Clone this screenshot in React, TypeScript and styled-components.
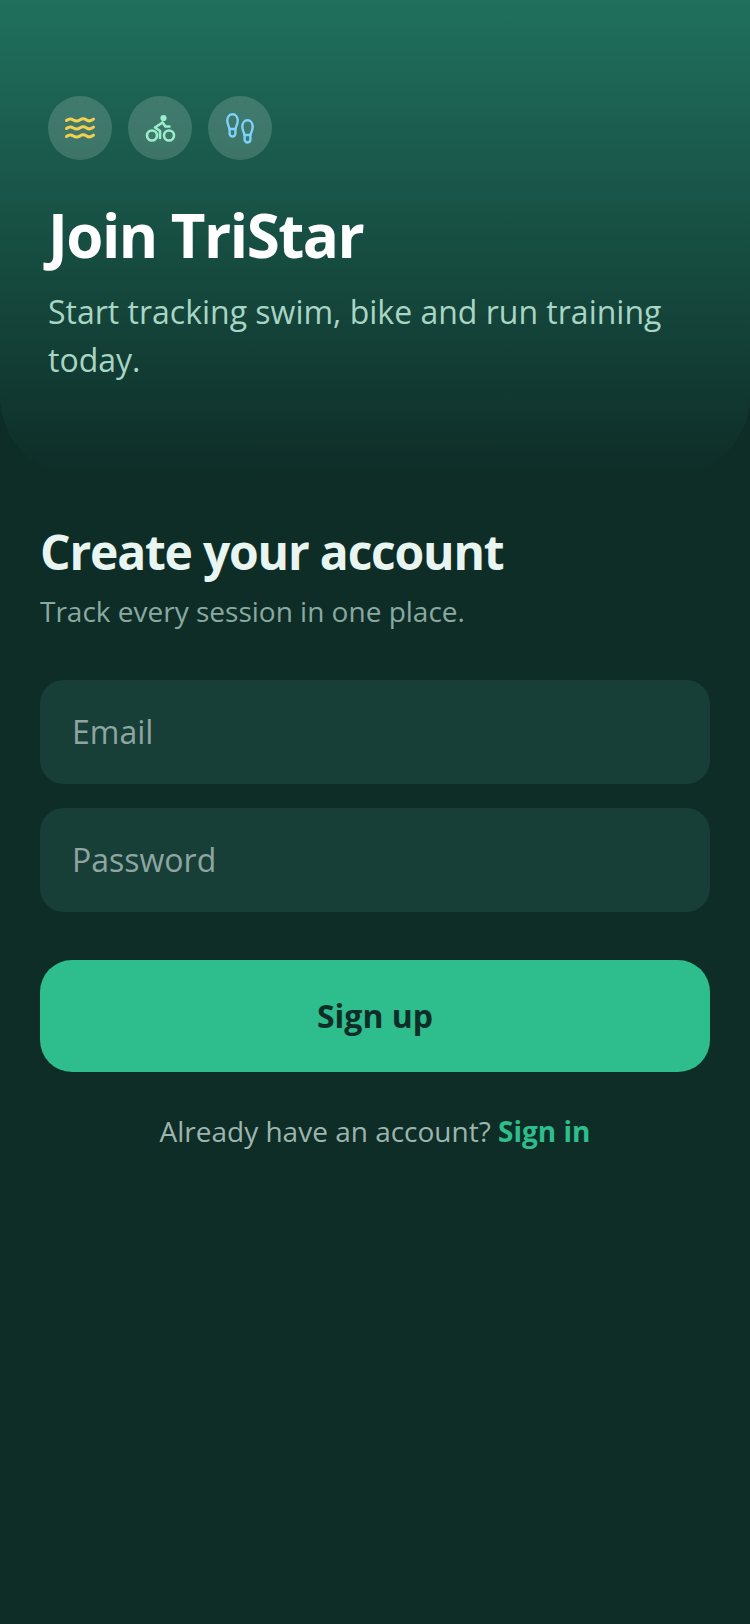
import React from "react";
import styled, { createGlobalStyle } from "styled-components";

const Global = createGlobalStyle`
  html, body { margin: 0; padding: 0; background: #0e2d27; }
  body { font-family: "Open Sans", "Noto Sans", sans-serif; }
  * { box-sizing: border-box; }
`;

const Page = styled.div`
  width: 750px;
  height: 1624px;
  overflow: hidden;
  background: #0e2d27;
`;

const Hero = styled.header`
  height: 476px;
  padding: 96px 48px 0;
  background: linear-gradient(180deg, #20705e 0%, #0e2d27 100%);
  border-radius: 0 0 80px 80px;
`;

const IconRow = styled.div`
  display: flex;
  gap: 16px;
  margin-bottom: 35px;
`;

const IconCircle = styled.div<{ $color: string }>`
  width: 64px;
  height: 64px;
  border-radius: 50%;
  background: rgba(255, 255, 255, 0.16);
  color: ${(p) => p.$color};
  display: flex;
  align-items: center;
  justify-content: center;
`;

const HeroTitle = styled.h1`
  margin: 0 0 13px;
  font-size: 60px;
  line-height: 80px;
  font-weight: 700;
  letter-spacing: -1.5px;
  color: #ffffff;
`;

const HeroText = styled.p`
  margin: 0;
  font-size: 32px;
  line-height: 48px;
  color: #a8d5c4;
`;

const Form = styled.main`
  padding: 44px 40px 0;
  display: flex;
  flex-direction: column;
`;

const FormTitle = styled.h2`
  margin: 0;
  font-size: 48px;
  line-height: 64px;
  font-weight: 700;
  letter-spacing: -1.2px;
  color: #e8f5f0;
`;

const FormText = styled.p`
  margin: 7px 0 49px;
  font-size: 28px;
  line-height: 40px;
  color: #8aa9a1;
`;

const Field = styled.div`
  height: 104px;
  border-radius: 24px;
  background: #173f37;
  padding: 0 32px 2px;
  display: flex;
  align-items: center;
  font-size: 32px;
  color: #8ea5a2;
  margin-bottom: 24px;
`;

const Submit = styled.button`
  height: 112px;
  margin-top: 24px;
  padding: 0 0 2px;
  border: 0;
  border-radius: 32px;
  background: #2ebd8c;
  color: #0e2d27;
  font-family: inherit;
  font-size: 32px;
  font-weight: 700;
`;

const Footer = styled.p`
  margin: 39px 0 0;
  text-align: center;
  font-size: 28px;
  line-height: 40px;
  color: #9db5ae;
`;

const FooterLink = styled.span`
  color: #2ebd8c;
  font-weight: 700;
`;

const WavesIcon = () => (
  <svg width="36" height="36" viewBox="0 0 36 36" fill="none" stroke="currentColor" strokeWidth="3" strokeLinecap="round">
    <path d="M4.5 10.5c2.4-2 4.6-2 6.8-.6s4.4 1.5 6.6 0 4.4-1.5 6.6 0 4.6 1.3 7-.7" />
    <path d="M4.5 18.5c2.4-2 4.6-2 6.8-.6s4.4 1.5 6.6 0 4.4-1.5 6.6 0 4.6 1.3 7-.7" />
    <path d="M4.5 26.5c2.4-2 4.6-2 6.8-.6s4.4 1.5 6.6 0 4.4-1.5 6.6 0 4.6 1.3 7-.7" />
  </svg>
);

const BikeIcon = () => (
  <svg width="36" height="36" viewBox="0 0 36 36" fill="none" stroke="currentColor" strokeWidth="2.6" strokeLinecap="round" strokeLinejoin="round">
    <circle cx="10" cy="25.5" r="5" />
    <circle cx="27" cy="25.5" r="5" />
    <circle cx="21.5" cy="8" r="3.1" fill="currentColor" stroke="none" />
    <path d="M20.5 12.5 L13 17.5 L18 21 V28" />
    <path d="M20.5 12.5 L23.5 16.5 H27.5" />
  </svg>
);

const FootIcon = () => (
  <svg width="36" height="36" viewBox="0 0 36 36" fill="none" stroke="currentColor" strokeWidth="2.4" strokeLinecap="round" strokeLinejoin="round">
    <path d="M10.5 4.2c-3.2 0-5.2 3-5.2 6.6 0 3.4 1.6 5 2.2 8.2h6c.6-3.2 2.2-4.8 2.2-8.2 0-3.6-2-6.6-5.2-6.6z" />
    <path d="M7.6 19v4.6a2.9 2.9 0 0 0 5.8 0V19" />
    <path d="M25.5 10.2c-3.2 0-5.2 3-5.2 6.6 0 3.4 1.6 5 2.2 8.2h6c.6-3.2 2.2-4.8 2.2-8.2 0-3.6-2-6.6-5.2-6.6z" />
    <path d="M22.6 25v4.6a2.9 2.9 0 0 0 5.8 0V25" />
  </svg>
);

export default function App() {
  return (
    <Page>
      <Global />
      <Hero>
        <IconRow>
          <IconCircle $color="#f5d04e"><WavesIcon /></IconCircle>
          <IconCircle $color="#9beecb"><BikeIcon /></IconCircle>
          <IconCircle $color="#7dd3fc"><FootIcon /></IconCircle>
        </IconRow>
        <HeroTitle>Join TriStar</HeroTitle>
        <HeroText>Start tracking swim, bike and run training today.</HeroText>
      </Hero>
      <Form>
        <FormTitle>Create your account</FormTitle>
        <FormText>Track every session in one place.</FormText>
        <Field>Email</Field>
        <Field>Password</Field>
        <Submit>Sign up</Submit>
        <Footer>Already have an account? <FooterLink>Sign in</FooterLink></Footer>
      </Form>
    </Page>
  );
}
